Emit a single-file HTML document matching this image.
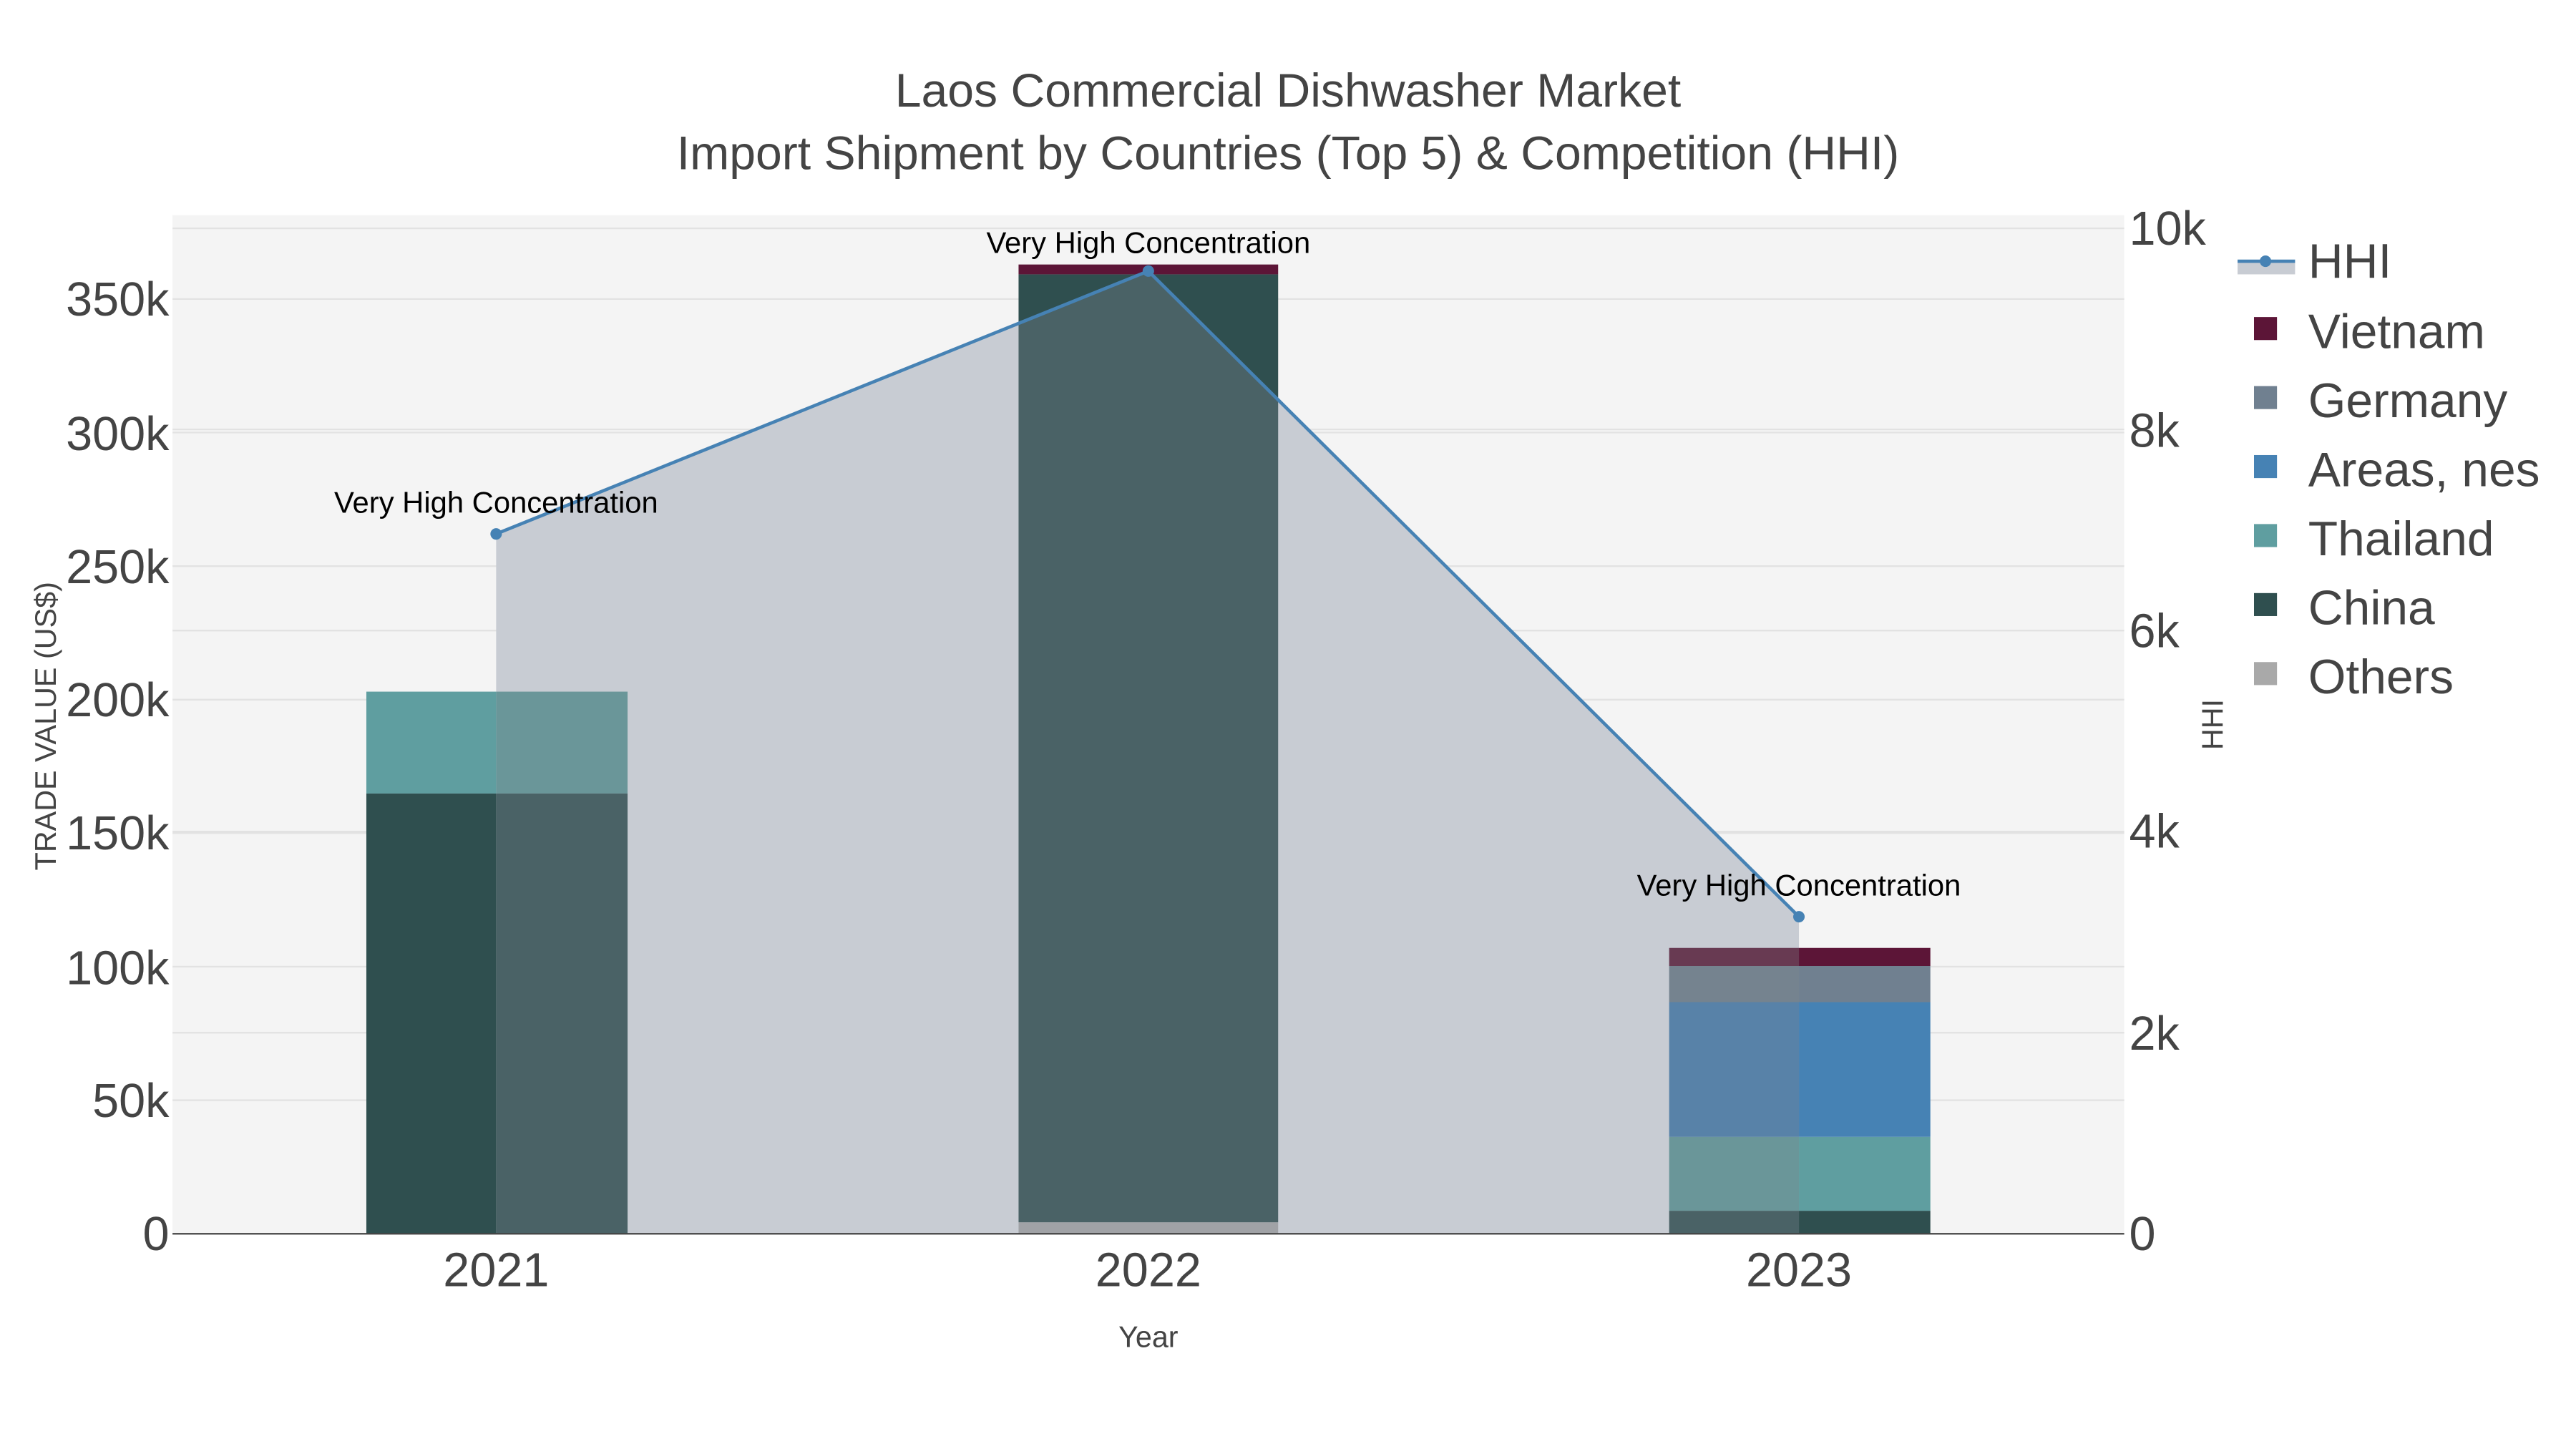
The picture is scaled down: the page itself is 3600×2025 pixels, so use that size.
<!DOCTYPE html>
<html><head><meta charset="utf-8"><style>html,body{margin:0;padding:0;background:#fff}svg{display:block}text{font-family:"Liberation Sans",sans-serif}</style></head><body>
<svg width="3600" height="2025" viewBox="0 0 1568 882" xmlns="http://www.w3.org/2000/svg">
<defs><clipPath id="ar"><polygon points="302,325 699,165 1095,558 1095,751 302,751"/></clipPath></defs>
<rect x="0" y="0" width="1568" height="882" fill="#fff"/>
<rect x="105" y="131" width="1188" height="620" fill="#f4f4f4"/>
<g stroke="#e2e2e2" stroke-width="1">
<line x1="105" x2="1293" y1="669.7" y2="669.7"/><line x1="105" x2="1293" y1="588.4" y2="588.4"/><line x1="105" x2="1293" y1="507.1" y2="507.1"/><line x1="105" x2="1293" y1="425.9" y2="425.9"/><line x1="105" x2="1293" y1="344.6" y2="344.6"/><line x1="105" x2="1293" y1="263.3" y2="263.3"/><line x1="105" x2="1293" y1="182" y2="182"/>
<line x1="105" x2="1293" y1="628.6" y2="628.6"/><line x1="105" x2="1293" y1="506.2" y2="506.2"/><line x1="105" x2="1293" y1="383.8" y2="383.8"/><line x1="105" x2="1293" y1="261.4" y2="261.4"/><line x1="105" x2="1293" y1="139" y2="139"/>
</g>
<g id="bars">
<rect x="223" y="483" width="159" height="268" fill="#2f4f4f"/>
<rect x="223" y="421" width="159" height="62" fill="#5f9ea0"/>
<rect x="620" y="744" width="158" height="7" fill="#a9a9a9"/>
<rect x="620" y="167" width="158" height="577" fill="#2f4f4f"/>
<rect x="620" y="161" width="158" height="6" fill="#5c1537"/>
<rect x="1016" y="737" width="159" height="14" fill="#2f4f4f"/>
<rect x="1016" y="692" width="159" height="45" fill="#5f9ea0"/>
<rect x="1016" y="610" width="159" height="82" fill="#4682b4"/>
<rect x="1016" y="588" width="159" height="22" fill="#708090"/>
<rect x="1016" y="577" width="159" height="11" fill="#5c1537"/>
</g>
<polygon points="302,325 699,165 1095,558 1095,751 302,751" fill="#c8ccd3"/>
<g clip-path="url(#ar)">
<rect x="223" y="483" width="159" height="268" fill="#4a6266"/>
<rect x="223" y="421" width="159" height="62" fill="#6a9699"/>
<rect x="620" y="744" width="158" height="7" fill="#a0a2a6"/>
<rect x="620" y="167" width="158" height="577" fill="#4a6266"/>
<rect x="620" y="161" width="158" height="6" fill="#683a52"/>
<rect x="1016" y="737" width="159" height="14" fill="#4a6266"/>
<rect x="1016" y="692" width="159" height="45" fill="#6a9699"/>
<rect x="1016" y="610" width="159" height="82" fill="#5882a8"/>
<rect x="1016" y="588" width="159" height="22" fill="#75838f"/>
<rect x="1016" y="577" width="159" height="11" fill="#683a52"/>
</g>
<line x1="105" x2="1293" y1="751" y2="751" stroke="#444" stroke-width="1"/>
<polyline points="302,325 699,165 1095,558" fill="none" stroke="#4682b4" stroke-width="2"/>
<circle cx="302" cy="325" r="3.5" fill="#4682b4"/><circle cx="699" cy="165" r="3.5" fill="#4682b4"/><circle cx="1095" cy="558" r="3.5" fill="#4682b4"/>
<g font-size="18.2" fill="#000" text-anchor="middle">
<text x="302" y="312">Very High Concentration</text>
<text x="699" y="154">Very High Concentration</text>
<text x="1095" y="545">Very High Concentration</text>
</g>
<g font-size="29" fill="#444" text-anchor="end">
<text x="103" y="761">0</text><text x="103" y="680">50k</text><text x="103" y="599">100k</text><text x="103" y="517">150k</text><text x="103" y="436">200k</text><text x="103" y="355">250k</text><text x="103" y="274">300k</text><text x="103" y="192">350k</text>
</g>
<g font-size="29" fill="#444" text-anchor="start">
<text x="1296" y="761">0</text><text x="1296" y="639">2k</text><text x="1296" y="516">4k</text><text x="1296" y="394">6k</text><text x="1296" y="272">8k</text><text x="1296" y="149">10k</text>
</g>
<g font-size="29" fill="#444" text-anchor="middle">
<text x="302" y="783">2021</text><text x="699" y="783">2022</text><text x="1095" y="783">2023</text>
</g>
<text x="699" y="820" font-size="18" fill="#444" text-anchor="middle">Year</text>
<text transform="translate(34,442) rotate(-90)" font-size="18" fill="#444" text-anchor="middle">TRADE VALUE (US$)</text>
<text transform="translate(1353,441) rotate(-90)" font-size="18" fill="#444" text-anchor="middle">HHI</text>
<text x="784" y="65" font-size="28.8" fill="#444" text-anchor="middle">Laos Commercial Dishwasher Market</text>
<text x="784" y="103" font-size="28.8" fill="#444" text-anchor="middle">Import Shipment by Countries (Top 5) &amp; Competition (HHI)</text>
<g font-size="29.5" fill="#444">
<rect x="1362" y="159" width="35" height="8" fill="#c8ccd3"/>
<line x1="1362" x2="1397" y1="159" y2="159" stroke="#4682b4" stroke-width="2"/><circle cx="1379" cy="159" r="3.5" fill="#4682b4"/>
<text x="1405" y="169">HHI</text>
<rect x="1372" y="193" width="14" height="14" fill="#5c1537"/><text x="1405" y="212">Vietnam</text>
<rect x="1372" y="235" width="14" height="14" fill="#708090"/><text x="1405" y="254">Germany</text>
<rect x="1372" y="277" width="14" height="14" fill="#4682b4"/><text x="1405" y="296">Areas, nes</text>
<rect x="1372" y="319" width="14" height="14" fill="#5f9ea0"/><text x="1405" y="338">Thailand</text>
<rect x="1372" y="361" width="14" height="14" fill="#2f4f4f"/><text x="1405" y="380">China</text>
<rect x="1372" y="403" width="14" height="14" fill="#a9a9a9"/><text x="1405" y="422">Others</text>
</g>
</svg>
</body></html>
